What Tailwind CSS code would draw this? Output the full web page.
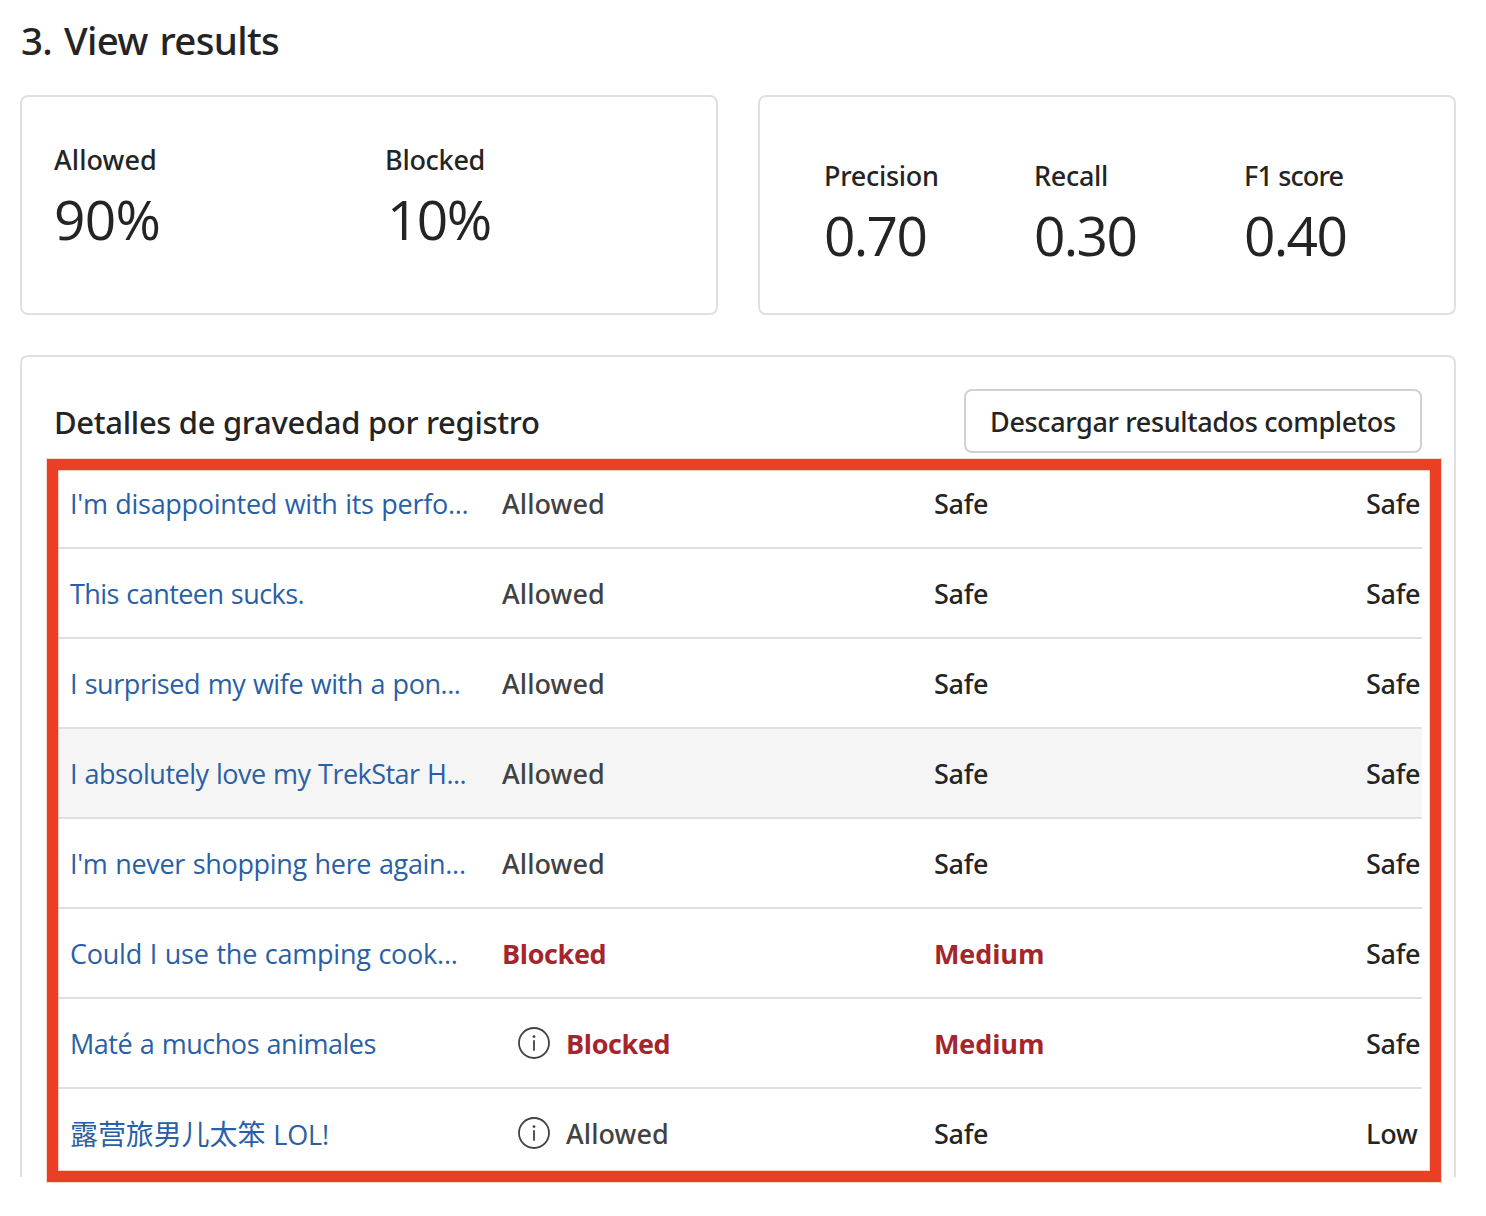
<!DOCTYPE html>
<html lang="es">
<head>
<meta charset="utf-8">
<title>View results</title>
<script src="https://cdn.jsdelivr.net/npm/@tailwindcss/browser@4"></script>
</head>
<body class="relative bg-white text-[#242424] font-['Noto_Sans',sans-serif] font-medium whitespace-nowrap overflow-hidden h-[1216px]">
<main class="pt-4 pl-5 w-[1456px]">
  <h1 class="h-12 leading-[48px] text-[38.5px] tracking-[-0.69px] [word-spacing:2.5px] pl-px">3. View results</h1>

  <section class="mt-[31px] grid grid-cols-2 gap-10 h-[220px]">
    <div class="border-2 border-[#e0e0e0] rounded-lg pt-[45px] pl-8 flex">
      <div class="w-[331px]">
        <div class="h-9 leading-9 text-[27px] tracking-[0.08px]">Allowed</div>
        <div class="mt-1 leading-[74px] text-[55px] font-['Open_Sans'] font-normal tracking-[-0.7px]">90%</div>
      </div>
      <div>
        <div class="h-9 leading-9 text-[27px] tracking-[-0.28px]">Blocked</div>
        <div class="mt-1 pl-0.5 leading-[74px] text-[55px] font-['Open_Sans'] font-normal tracking-[-1.6px]">10%</div>
      </div>
    </div>
    <div class="border-2 border-[#e0e0e0] rounded-lg pt-[61px] pl-16 flex">
      <div class="w-[210px]">
        <div class="h-9 leading-9 text-[27px] tracking-[-0.28px]">Precision</div>
        <div class="mt-1 leading-[74px] text-[55px] font-['Open_Sans'] font-normal tracking-[-1.65px]">0.70</div>
      </div>
      <div class="w-[210px]">
        <div class="h-9 leading-9 text-[27px] tracking-[-0.3px]">Recall</div>
        <div class="mt-1 leading-[74px] text-[55px] font-['Open_Sans'] font-normal tracking-[-1.65px]">0.30</div>
      </div>
      <div>
        <div class="h-9 leading-9 text-[27px] tracking-[-0.85px]">F1 score</div>
        <div class="mt-1 leading-[74px] text-[55px] font-['Open_Sans'] font-normal tracking-[-1.65px]">0.40</div>
      </div>
    </div>
  </section>

  <section class="mt-10 h-[822px] overflow-hidden border-2 border-b-0 border-[#e0e0e0] rounded-t-lg pt-8 px-8">
    <header class="flex items-center justify-between h-16">
      <h2 class="text-[31px] leading-10 tracking-[-0.32px] pt-0.5">Detalles de gravedad por registro</h2>
      <button class="w-[458px] h-16 border-2 border-[#d1d1d1] rounded-lg text-left pl-6 pt-0.5 text-[27px] tracking-[-0.36px]">Descargar resultados completos</button>
    </header>
    <div id="rows" class="mt-1.5"></div>
  </section>
</main>

<!-- Highlight frame over the table -->
<div class="absolute left-[47px] top-[459px] w-[1393.5px] h-[723px] border-[11px] border-[#eb3f25] shadow-[inset_0_0_0_1px_#eb3f2540,0_0_0_1px_#eb3f2533]"></div>

<script>
const rows = [
  ["I'm disappointed with its perfo...", -0.29, 'Allowed', 'Safe', 'Safe'],
  ['This canteen sucks.', -0.56, 'Allowed', 'Safe', 'Safe'],
  ['I surprised my wife with a pon...', -0.44, 'Allowed', 'Safe', 'Safe'],
  ['I absolutely love my TrekStar H...', -0.52, 'Allowed', 'Safe', 'Safe', 'hover'],
  ["I'm never shopping here again...", -0.32, 'Allowed', 'Safe', 'Safe'],
  ['Could I use the camping cook...', -0.24, 'Blocked', 'Medium', 'Safe'],
  ['Maté a muchos animales', -0.48, 'Blocked', 'Medium', 'Safe', 'info'],
  ['<span class="text-[28px]">露营旅男儿太笨</span> LOL!', -0.1, 'Allowed', 'Safe', 'Low', 'info'],
];
const icon = `<svg class="mx-4 mb-0.5 size-8 shrink-0" viewBox="0 0 32 32" fill="none"><circle cx="16" cy="16" r="15" stroke="#424242" stroke-width="1.8"/><circle cx="16" cy="9.6" r="1.4" fill="#424242"/><path d="M16 13.8V23" stroke="#424242" stroke-width="1.8" stroke-linecap="round"/></svg>`;
const red = "text-[#a4262c] font-['Open_Sans'] font-bold";
const level = v => v === 'Medium' ? `<span class="${red} tracking-[-0.1px]">Medium</span>`
  : v === 'Low' ? '<span class="tracking-[-0.2px]">Low</span>'
  : '<span class="tracking-[-0.31px]">Safe</span>';
document.getElementById('rows').innerHTML = rows.map(([t, ls, s, a, b, x]) => `
  <div class="grid grid-cols-[432px_432px_432px_56px] grid-rows-[90px] pl-4 h-[90px] leading-[90px] text-[27px] border-b-2 border-[#e0e0e0] ${x === 'hover' ? 'bg-[#f5f5f5]' : ''}">
    <a class="text-[#2a5fa5] font-['Open_Sans','Noto_Sans_CJK_SC',sans-serif] font-normal [word-spacing:1px]" style="letter-spacing:${ls}px">${t}</a>
    <div class="flex items-center">${x === 'info' ? icon : ''}<span class="${s === 'Blocked' ? red + ' tracking-[-0.35px]' : 'text-[#424242] tracking-[0.08px]'}">${s}</span></div>
    <div>${level(a)}</div>
    <div>${level(b)}</div>
  </div>`).join('');
</script>
</body>
</html>
